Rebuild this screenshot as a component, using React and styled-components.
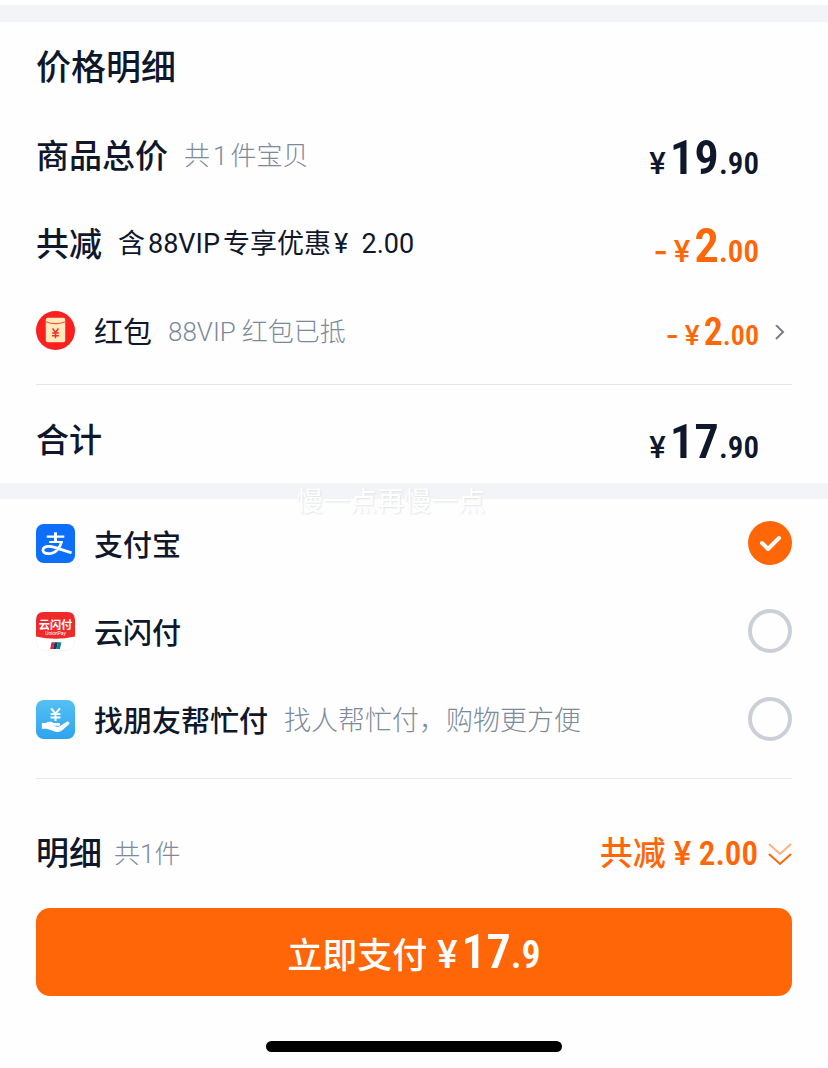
import React, { useState } from 'react'
import styled, { createGlobalStyle } from 'styled-components'

const ink = '#0f172b'
const muted = '#7d8a9c'
const orange = '#ff6608'
const line = '#e6e7ea'
const digits = `'Roboto Condensed', Roboto, 'Noto Sans CJK SC', sans-serif`

const GlobalStyle = createGlobalStyle`
  * {
    box-sizing: border-box;
  }

  body {
    margin: 0;
    background: #fefefe;
    color: ${ink};
    font-family: Roboto, 'Noto Sans CJK SC', sans-serif;
  }

  button {
    border: 0;
    padding: 0;
    background: none;
    color: inherit;
    font: inherit;
    cursor: pointer;
  }
`

const Page = styled.main`
  position: relative;
  padding-top: 5px;
`

const Band = styled.div`
  height: ${({ $height }) => $height}px;
  background: #f3f4f7;
`

const Section = styled.section`
  padding: 0 36px;
`

const Title = styled.h1`
  margin: 0;
  font-size: 35px;
  line-height: 48px;
  font-weight: 500;
`

const Label = styled.span`
  font-size: ${({ $size }) => $size || 33}px;
  line-height: 48px;
  font-weight: ${({ $weight }) => $weight || 500};
`

const Note = styled.span`
  margin-left: 16px;
  color: ${({ $dark }) => ($dark ? ink : muted)};
  font-size: ${({ $size }) => $size || 26}px;
  line-height: 48px;
  font-weight: ${({ $dark }) => ($dark ? 400 : 300)};
`

const Row = styled.div`
  display: flex;
  align-items: center;
  width: 100%;
  height: 88px;
  text-align: left;

  ${Title}, ${Label} {
    padding-top: 5px;
  }

  ${Note} {
    padding-top: 3px;
  }
`

const TotalRow = styled(Row)`
  height: 98px;
  padding-top: 8px;
`

const Latin = styled.span`
  margin: 0 3px;
`

const Divider = styled.hr`
  height: 1px;
  margin: ${({ $top }) => $top}px 0 0;
  border: 0;
  background: ${line};
`

const Price = styled.span`
  display: flex;
  align-items: baseline;
  margin-left: auto;
  padding-top: ${({ $small }) => ($small ? 8 : 14)}px;
  padding-right: ${({ $flush }) => ($flush ? 0 : 33)}px;
  color: ${({ $off }) => ($off ? orange : ink)};
  font-family: ${digits};
  font-size: ${({ $small }) => ($small ? 28 : 31)}px;
  line-height: 56px;
  font-weight: 600;
`

const Whole = styled.span`
  margin-left: 4px;
  font-size: ${({ $small }) => ($small ? 38 : 49)}px;
`

const Yen = styled.span`
  font-family: Roboto, sans-serif;
  font-weight: 500;
`

const Minus = styled.span`
  margin-right: 6px;
  font-family: Inter, Roboto, sans-serif;
`

const Chevron = styled.svg`
  width: 33px;
  height: 20px;
`

const Icon = styled.svg`
  flex: none;
  width: 39px;
  height: 39px;
  margin-right: 19px;
`

const RadioBox = styled.span`
  display: grid;
  margin-left: auto;

  > * {
    grid-area: 1 / 1;
  }

  svg {
    width: 44px;
    height: 44px;
    pointer-events: none;
  }
`

const Radio = styled.input`
  appearance: none;
  width: 44px;
  height: 44px;
  margin: 0;
  border: 4px solid #cbd0d8;
  border-radius: 50%;

  &:checked {
    border: 0;
    background: ${orange};
  }
`

const Summary = styled.div`
  display: flex;
  align-items: center;
  height: 129px;
  padding-top: 20px;

  ${Note} {
    margin-left: 12px;
  }
`

const Toggle = styled.button`
  display: flex;
  align-items: center;
  margin-left: auto;

  &&& {
    color: ${orange};
  }

  svg {
    width: 24px;
    height: 28px;
    margin-left: 10px;
  }
`

const Saved = styled.span`
  margin-left: 8px;
  font-family: ${digits};
  font-size: 33px;
  font-weight: 600;
`

const Pay = styled.button`
  &&& {
    display: flex;
    align-items: baseline;
    justify-content: center;
    width: 100%;
    height: 88px;
    border-radius: 14px;
    background: ${orange};
    color: #fff;
    font-size: 35px;
    line-height: 88px;
    font-weight: 500;
  }
`

const PayPrice = styled.span`
  margin-left: 10px;
  font-family: ${digits};
  font-size: 38px;
  font-weight: 600;
`

const HomeBar = styled.div`
  width: 296px;
  height: 11px;
  margin: 45px auto 16px;
  border-radius: 6px;
  background: #000;
`

const Watermark = styled.div`
  position: absolute;
  top: 482px;
  left: 296px;
  color: #fff;
  font-size: 27px;
  line-height: 40px;
  text-shadow: 1px 1px 2px #dfe2e7;
  pointer-events: none;
`

const RedPacketIcon = () => (
  <Icon viewBox="0 0 40 40" aria-hidden="true">
    <circle cx="20" cy="20" r="20" fill="#f9201f" />
    <path d="M10 9Q10 7 12 7H28Q30 7 30 9V30Q30 32 28 32H12Q10 32 10 30Z" fill="#ffe9bd" />
    <path d="M10 11Q20 15 30 11" fill="none" stroke="#f0563d" strokeWidth="1.200" />
    <path d="M17 18l3 4 3-4M20 22v6M16.500 22.500h7M16.500 25.300h7" fill="none" stroke="#f0302a" strokeWidth="1.600" />
  </Icon>
)

const AlipayIcon = () => (
  <Icon viewBox="0 0 40 40" aria-hidden="true">
    <rect width="40" height="40" rx="8" fill="#0d6ff9" />
    <g fill="none" stroke="#fff">
      <path d="M11 13H29M13.500 18.500H27.500" strokeWidth="2.200" />
      <path d="M20 8.500V18" strokeWidth="3" />
      <path d="M26.300 18C25 24 20 30.500 13 30.500C8 30.500 6.500 28 7.200 26C8.500 22.500 14 22.300 19 24C25 26 31 28 36.500 29.500" strokeWidth="2.800" />
    </g>
  </Icon>
)

const UnionPayIcon = () => (
  <Icon viewBox="0 0 40 40" aria-hidden="true">
    <rect x="0.500" y="0.500" width="39" height="39" rx="8" fill="#fff" stroke="#f7f7f8" />
    <path d="M0 25V8Q0 0 8 0H32Q40 0 40 8V25Q20 30 0 25Z" fill="#ee2a2b" />
    <text x="20" y="17" textAnchor="middle" fontSize="11.500" fontWeight="700" fill="#fff">云闪付</text>
    <text x="20" y="23.500" textAnchor="middle" fontSize="5" fill="#fff">UnionPay</text>
    <path d="M16 31H19L17.500 38H14.500Z" fill="#e0243c" />
    <path d="M19 31H22.500L21 38H17.500Z" fill="#1c3766" />
    <path d="M22.500 31H26L24.500 38H21Z" fill="#0c8580" />
  </Icon>
)

const FriendPayIcon = () => (
  <Icon viewBox="0 0 40 40" aria-hidden="true">
    <defs>
      <linearGradient id="sky" x1="0" y1="0" x2="0" y2="1">
        <stop offset="0" stopColor="#55c0f3" />
        <stop offset="1" stopColor="#2fa3ee" />
      </linearGradient>
    </defs>
    <rect width="40" height="40" rx="8" fill="url(#sky)" />
    <path d="M15.500 8.500l4.500 5.500L24.500 8.500M20 14V21.500M15 14.500h10M15 18h10" fill="none" stroke="#fff" strokeWidth="2" />
    <path d="M6 23.500H10C13 21.500 16 22 18 23.500H23C25.500 23.500 25.500 26.500 23 26.500H18C21 28 24 27.500 27 25L32 22Q35 22 34 24.500L27 31Q24 33.500 20 32.500L11 29.500H6Z" fill="#fff" />
  </Icon>
)

const Amount = ({ whole, cents, off, small, children }) => (
  <Price $off={off} $small={small} $flush={Boolean(children)}>
    {off && <Minus>-</Minus>}
    <Yen>¥</Yen>
    <Whole $small={small}>{whole}</Whole>.{cents}
    {children}
  </Price>
)

const methods = [
  { id: 'alipay', name: '支付宝', icon: AlipayIcon },
  { id: 'unionpay', name: '云闪付', icon: UnionPayIcon },
  { id: 'friend', name: '找朋友帮忙付', icon: FriendPayIcon, note: '找人帮忙付，购物更方便' }
]

const App = () => {
  const [method, setMethod] = useState('alipay')

  return (
    <Page>
      <GlobalStyle />
      <Band $height={17} />
      <Section>
        <Row>
          <Title>价格明细</Title>
        </Row>
        <Row>
          <Label>商品总价</Label>
          <Note>共<Latin>1</Latin>件宝贝</Note>
          <Amount whole="19" cents="90" />
        </Row>
        <Row>
          <Label>共减</Label>
          <Note $dark $size={27}>含<Latin>88VIP</Latin>专享优惠<Latin>¥&nbsp; 2.00</Latin></Note>
          <Amount whole="2" cents="00" off />
        </Row>
        <Row as="button" type="button">
          <RedPacketIcon />
          <Label $size={29} $weight={400}>红包</Label>
          <Note>88VIP<Latin />红包已抵</Note>
          <Amount whole="2" cents="00" off small>
            <Chevron viewBox="0 0 33 20" aria-hidden="true">
              <path d="M17 0l7 7-7 7" fill="none" stroke="#777e8a" strokeWidth="2" />
            </Chevron>
          </Amount>
        </Row>
        <Divider $top={10} />
        <TotalRow>
          <Label>合计</Label>
          <Amount whole="17" cents="90" />
        </TotalRow>
      </Section>
      <Band $height={16} />
      <Section>
        {methods.map(({ id, name, icon: MethodIcon, note }) => (
          <Row as="label" key={id}>
            <MethodIcon />
            <Label $size={29}>{name}</Label>
            {note && <Note $size={27}>{note}</Note>}
            <RadioBox>
              <Radio type="radio" name="method" checked={method === id} onChange={() => setMethod(id)} />
              {method === id && (
                <svg viewBox="0 0 44 44" aria-hidden="true">
                  <path d="M14 22l6 6 11-11" fill="none" stroke="#fff" strokeWidth="4" strokeLinecap="round" strokeLinejoin="round" />
                </svg>
              )}
            </RadioBox>
          </Row>
        ))}
        <Divider $top={15} />
        <Summary>
          <Label>明细</Label>
          <Note>共1件</Note>
          <Toggle type="button">
            <Label>共减</Label>
            <Saved><Yen>¥</Yen> 2.00</Saved>
            <svg viewBox="0 0 24 28" fill="none" stroke={orange} strokeWidth="2" aria-hidden="true">
              <path d="M1 4l11 10L23 4" opacity="0.5" />
              <path d="M1 14l11 10 11-10" />
            </svg>
          </Toggle>
        </Summary>
        <Pay type="button">
          立即支付
          <PayPrice><Yen>¥</Yen><Whole>17</Whole>.9</PayPrice>
        </Pay>
      </Section>
      <HomeBar />
      <Watermark>慢一点再慢一点</Watermark>
    </Page>
  )
}

export default App
